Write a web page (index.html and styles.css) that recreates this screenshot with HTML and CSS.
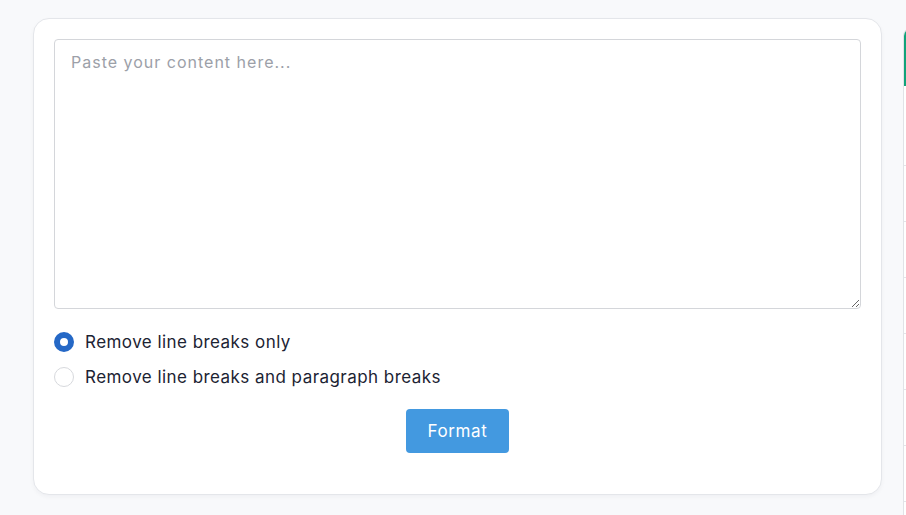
FILE: index.html
```html
<!DOCTYPE html>
<html lang="en">
<head>
<meta charset="utf-8">
<title>Remove line breaks</title>
<link rel="stylesheet" href="styles.css">
</head>
<body>
<div class="page">
  <main class="card">
    <textarea class="input" placeholder="Paste your content here..."></textarea>
    <div class="options">
      <label class="option">
        <input type="radio" name="mode" checked>
        <span class="dot"></span>
        <span class="label-text">Remove line breaks only</span>
      </label>
      <label class="option">
        <input type="radio" name="mode">
        <span class="dot"></span>
        <span class="label-text">Remove line breaks and paragraph breaks</span>
      </label>
    </div>
    <div class="actions">
      <button class="btn" type="button">Format</button>
    </div>
  </main>
  <aside class="side">
    <div class="side-item active"></div>
    <div class="side-item tall"></div>
    <div class="side-item"></div>
    <div class="side-item"></div>
    <div class="side-item"></div>
    <div class="side-item"></div>
    <div class="side-item"></div>
    <div class="side-item"></div>
  </aside>
</div>
</body>
</html>
```

FILE: styles.css
```css
* { box-sizing: border-box; }
html, body {
  margin: 0;
  height: 100%;
  overflow: hidden;
}
body {
  background: #f8f9fb;
  font-family: Inter, "Noto Sans", sans-serif;
  color: #1c2333;
}
.page {
  display: flex;
  align-items: flex-start;
  gap: 21px;
  padding: 18px 0 0 33px;
  width: 906px;
  overflow: hidden;
}
.card {
  flex: 0 0 849px;
  background: #fff;
  border: 1px solid #e4e6ea;
  border-radius: 16px;
  padding: 20px 20px 41px;
  box-shadow: 0 2px 4px rgba(17, 24, 39, 0.04);
}
.input {
  display: block;
  width: 100%;
  height: 270px;
  border: 1px solid #d4d6da;
  border-radius: 4px;
  padding: 10px 16px;
  font-family: Inter, "Noto Sans", sans-serif;
  font-size: 16px;
  letter-spacing: 1px;
  line-height: 24px;
  color: #1c2333;
  resize: vertical;
  outline: none;
}
.input::placeholder { color: #9ca0a8; }
.options {
  display: flex;
  flex-direction: column;
  gap: 11px;
  margin-top: 21px;
}
.option {
  display: flex;
  align-items: center;
  gap: 11px;
  height: 24px;
  font-size: 17px;
  letter-spacing: 0.45px;
  cursor: pointer;
}
.option input {
  position: absolute;
  opacity: 0;
  width: 0;
  height: 0;
}
.dot {
  width: 20px;
  height: 20px;
  border-radius: 50%;
  border: 1px solid #d7d9dd;
  background: #fff;
  flex: 0 0 20px;
}
.option input:checked + .dot {
  border: 6px solid #2568c6;
}
.actions {
  display: flex;
  justify-content: center;
  margin-top: 20px;
}
.btn {
  width: 103px;
  height: 44px;
  border: none;
  border-radius: 4px;
  background: #4399e0;
  color: #fff;
  font-family: Inter, "Noto Sans", sans-serif;
  font-size: 17px;
  letter-spacing: 0.6px;
  cursor: pointer;
}
.side {
  flex: 0 0 300px;
  margin-top: 10px;
  background: #fff;
  border-left: 1px solid #e1e3e7;
  border-top: 1px solid #e1e3e7;
  border-top-left-radius: 8px;
  height: 490px;
  overflow: hidden;
}
.side-item {
  height: 56px;
  border-bottom: 1px solid #e3e5e9;
}
.side-item.active {
  height: 57px;
  border-left: 3px solid #10a37a;
  border-bottom: none;
  margin-left: -1px;
}
.side-item.tall { height: 80px; }
```
